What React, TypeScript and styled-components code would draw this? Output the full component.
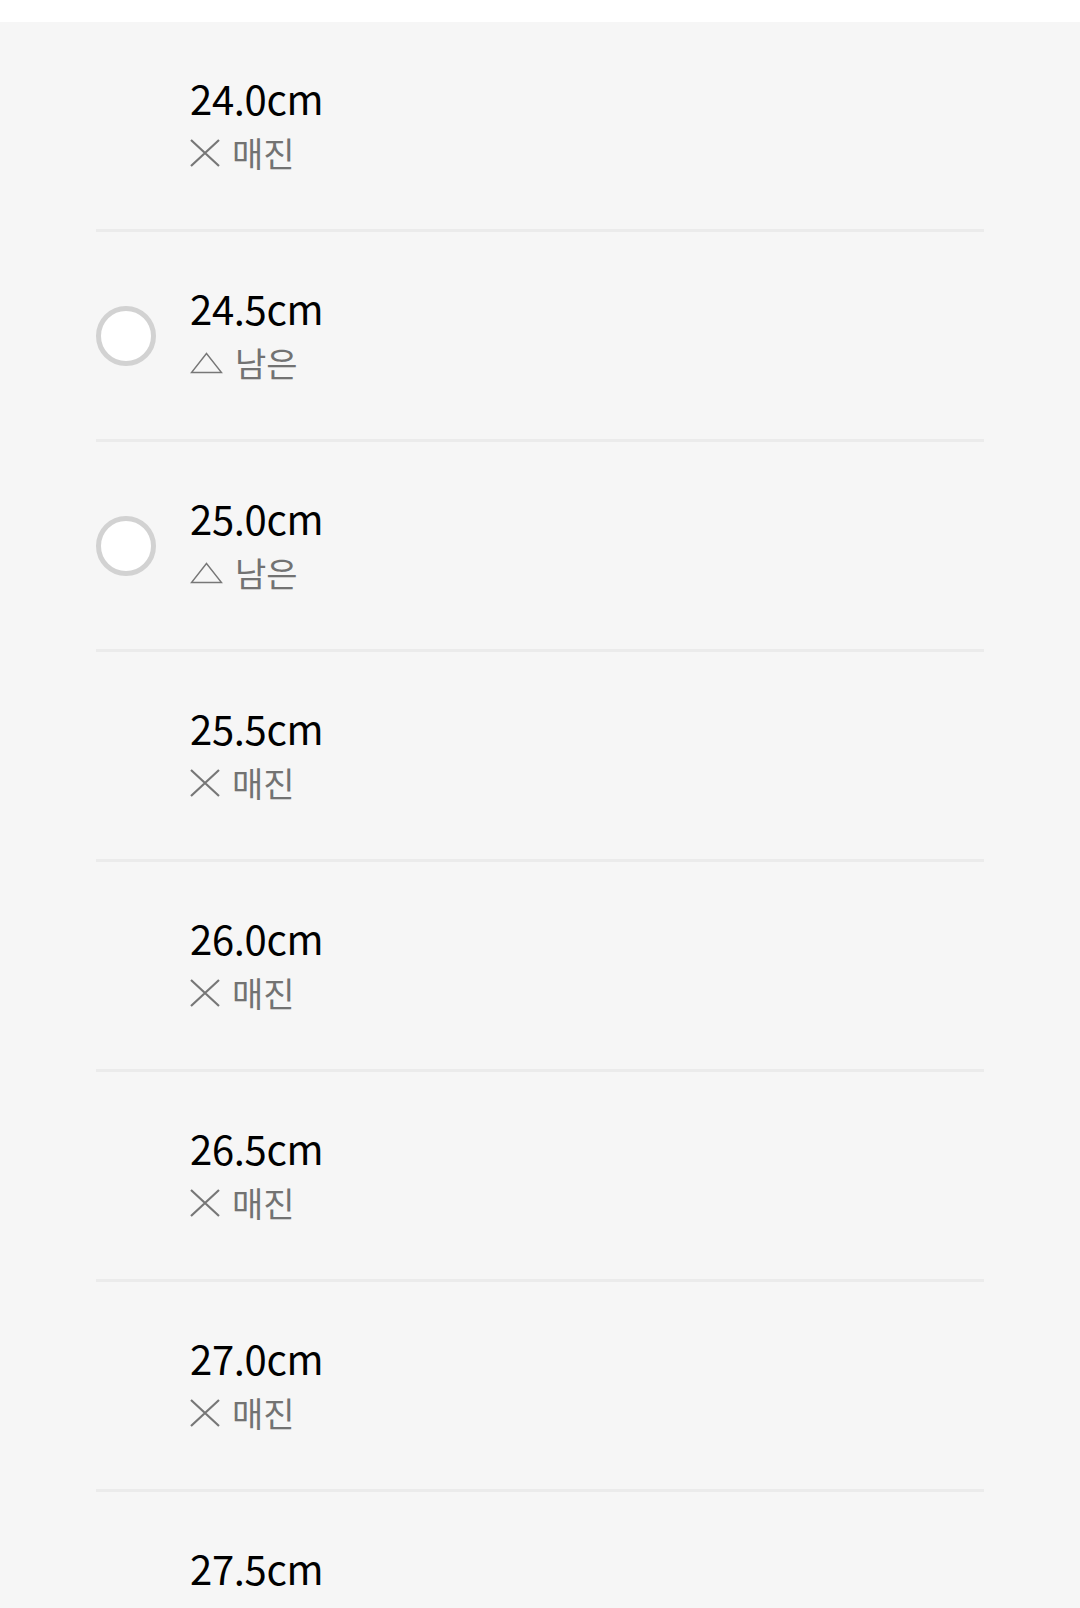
import React from "react";
import styled, { createGlobalStyle } from "styled-components";

const Global = createGlobalStyle`
  html, body { margin: 0; padding: 0; background: #f6f6f6; }
  body { font-family: "Noto Sans CJK KR", "Noto Sans", sans-serif; overflow: hidden; }
`;

const Page = styled.div`
  width: 1080px;
  height: 1608px;
  overflow: hidden;
  background: #f6f6f6;
`;

const TopBar = styled.div`
  height: 22px;
  background: #ffffff;
`;

const List = styled.ul`
  list-style: none;
  margin: 0;
  padding: 0 96px;
`;

const Row = styled.li`
  display: flex;
  align-items: center;
  height: 207px;
  border-bottom: 3px solid #ebebeb;
`;

const RadioSlot = styled.div`
  width: 60px;
  height: 60px;
  flex: none;
  margin-right: 34px;
`;

const Radio = styled.div`
  width: 60px;
  height: 60px;
  box-sizing: border-box;
  border-radius: 50%;
  border: 5px solid #d2d2d2;
  background: #ffffff;
`;

const Info = styled.div`
  display: flex;
  flex-direction: column;
  align-self: flex-start;
  margin-top: 46px;
`;

const Size = styled.div`
  font-size: 40px;
  line-height: 61px;
  color: #000000;
  letter-spacing: -0.3px;
`;

const Status = styled.div`
  display: flex;
  align-items: center;
  font-size: 34px;
  line-height: 48px;
  color: #727272;
`;

const IconBox = styled.span<{ $w: number }>`
  display: inline-flex;
  width: ${(p) => p.$w}px;
  margin-right: 12px;
  align-items: center;
`;

const XIcon = () => (
  <svg width="30" height="30" viewBox="0 0 30 30">
    <path d="M1 2 L29 28 M29 2 L1 28" stroke="#777" strokeWidth="2.2" fill="none" />
  </svg>
);

const TriIcon = () => (
  <svg width="33" height="22" viewBox="0 0 33 22">
    <path d="M16.5 1.5 L31.5 20.5 L1.5 20.5 Z" stroke="#777" strokeWidth="1.4" fill="none" strokeLinejoin="miter" />
  </svg>
);

type Item = { size: string; available: boolean };

const items: Item[] = [
  { size: "24.0cm", available: false },
  { size: "24.5cm", available: true },
  { size: "25.0cm", available: true },
  { size: "25.5cm", available: false },
  { size: "26.0cm", available: false },
  { size: "26.5cm", available: false },
  { size: "27.0cm", available: false },
  { size: "27.5cm", available: false },
];

export default function App() {
  return (
    <Page>
      <Global />
      <TopBar />
      <List>
        {items.map((it) => (
          <Row key={it.size}>
            <RadioSlot>{it.available && <Radio />}</RadioSlot>
            <Info>
              <Size>{it.size}</Size>
              <Status>
                {it.available ? (
                  <IconBox $w={33}>
                    <TriIcon />
                  </IconBox>
                ) : (
                  <IconBox $w={30}>
                    <XIcon />
                  </IconBox>
                )}
                {it.available ? "남은" : "매진"}
              </Status>
            </Info>
          </Row>
        ))}
      </List>
    </Page>
  );
}
